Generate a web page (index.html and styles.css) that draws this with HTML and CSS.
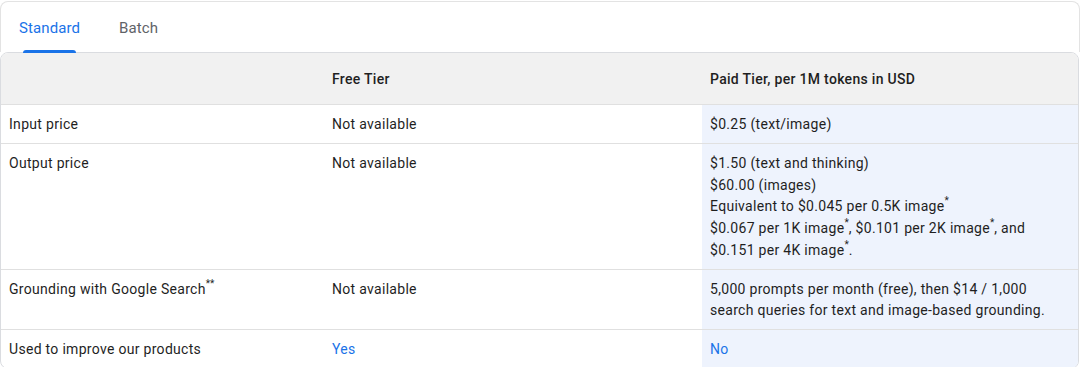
FILE: index.html
```html
<!DOCTYPE html>
<html>
<head>
<meta charset="utf-8">
<link rel="stylesheet" href="styles.css">
</head>
<body>
<div class="page">
  <div class="tabs">
    <div class="tab active">Standard</div>
    <div class="tab">Batch</div>
  </div>
  <table class="pricing">
    <colgroup>
      <col class="c1"><col class="c2"><col class="c3">
    </colgroup>
    <thead>
      <tr>
        <th></th>
        <th>Free Tier</th>
        <th class="paid">Paid Tier, per 1M tokens in USD</th>
      </tr>
    </thead>
    <tbody>
      <tr>
        <td>Input price</td>
        <td>Not available</td>
        <td class="paid">$0.25 (text/image)</td>
      </tr>
      <tr>
        <td>Output price</td>
        <td>Not available</td>
        <td class="paid">$1.50 (text and thinking)<br>$60.00 (images)<br>Equivalent to $0.045 per 0.5K image<sup>*</sup><br>$0.067 per 1K image<sup>*</sup>, $0.101 per 2K image<sup>*</sup>, and<br>$0.151 per 4K image<sup>*</sup>.</td>
      </tr>
      <tr>
        <td>Grounding with Google Search<sup>**</sup></td>
        <td>Not available</td>
        <td class="paid">5,000 prompts per month (free), then $14 / 1,000<br>search queries for text and image-based grounding.</td>
      </tr>
      <tr>
        <td>Used to improve our products</td>
        <td class="link">Yes</td>
        <td class="paid link">No</td>
      </tr>
    </tbody>
  </table>
</div>
</body>
</html>
```
FILE: styles.css
```css
html, body {
  margin: 0;
  padding: 0;
  background: #ffffff;
}
body {
  font-family: Roboto, "Liberation Sans", Arial, sans-serif;
  color: #1f1f1f;
  font-size: 14px;
}
.page {
  padding-top: 1px;
  width: 1080px;
}
.tabs {
  display: flex;
  height: 50px;
  border: 1px solid #e3e3e3;
  border-bottom: none;
  border-radius: 8px 8px 0 0;
  padding-left: 18px;
}
.tab {
  position: relative;
  font-size: 15px;
  line-height: 52px;
  height: 50px;
  color: #5f6368;
  padding: 0 19px 0 0;
  margin-right: 20px;
  letter-spacing: 0.1px;
}
.tab.active {
  color: #1a73e8;
}
.tab.active::after {
  content: "";
  position: absolute;
  left: 4px;
  right: 23px;
  bottom: -1px;
  height: 3px;
  background: #1a73e8;
  border-radius: 3px 3px 0 0;
}
.pricing {
  width: 1079px;
  border-collapse: separate;
  border-spacing: 0;
  border: 1px solid #dadce0;
  border-radius: 8px;
  overflow: hidden;
  table-layout: fixed;
}
.c1 { width: 323px; }
.c2 { width: 378px; }
.c3 { width: 376px; }
th, td {
  text-align: left;
  vertical-align: top;
  padding: 9px 8px 7px;
  line-height: 21.75px;
  border-bottom: 1px solid #e0e0e0;
  font-size: 14px;
  letter-spacing: 0.3px;
}
tbody tr:last-child td {
  border-bottom: none;
}
th {
  background: #f1f1f1;
  font-weight: 500;
  padding: 15px 8px 14px;
  line-height: 22px;
  color: #1f1f1f;
}
td.paid {
  background: #eef3fd;
}
th.paid {
  background: #f1f1f1;
}
.link {
  color: #1a73e8;
}
sup {
  font-size: 10px;
  line-height: 10px;
  vertical-align: top;
  letter-spacing: 0;
}
```
